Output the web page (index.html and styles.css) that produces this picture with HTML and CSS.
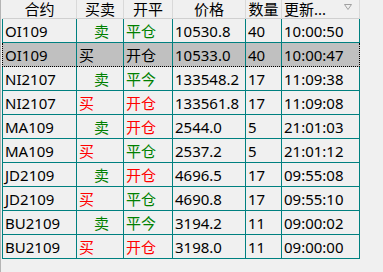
FILE: index.html
```html
<!DOCTYPE html>
<html lang="zh-CN">
<head>
<meta charset="utf-8">
<title>成交记录</title>
<link rel="stylesheet" href="styles.css">
</head>
<body>
<div class="frame">
<table class="grid">
  <thead>
    <tr>
      <th class="c1">合约</th>
      <th class="c2">买卖</th>
      <th class="c3">开平</th>
      <th class="c4">价格</th>
      <th class="c5">数量</th>
      <th class="c6 sortcol"><span class="htxt">更新...</span><svg class="sort" width="8" height="6" viewBox="0 0 8 6"><path d="M0.5 0.5 H7.5 L4 5.5 Z" fill="none" stroke="#a0a0a0" stroke-width="1"/></svg></th>
    </tr>
  </thead>
  <tbody>
    <tr><td>OI109</td><td class="sell"><span class="ind">卖</span></td><td class="close">平仓</td><td>10530.8</td><td>40</td><td>10:00:50</td></tr>
    <tr class="selected"><td>OI109</td><td>买</td><td>开仓</td><td>10533.0</td><td>40</td><td>10:00:47</td></tr>
    <tr><td>NI2107</td><td class="sell"><span class="ind">卖</span></td><td class="close">平今</td><td>133548.2</td><td>17</td><td>11:09:38</td></tr>
    <tr><td>NI2107</td><td class="buy">买</td><td class="open">开仓</td><td>133561.8</td><td>17</td><td>11:09:08</td></tr>
    <tr><td>MA109</td><td class="sell"><span class="ind">卖</span></td><td class="open">开仓</td><td>2544.0</td><td>5</td><td>21:01:03</td></tr>
    <tr><td>MA109</td><td class="buy">买</td><td class="close">平仓</td><td>2537.2</td><td>5</td><td>21:01:12</td></tr>
    <tr><td>JD2109</td><td class="sell"><span class="ind">卖</span></td><td class="open">开仓</td><td>4696.5</td><td>17</td><td>09:55:08</td></tr>
    <tr><td>JD2109</td><td class="buy">买</td><td class="close">平仓</td><td>4690.8</td><td>17</td><td>09:55:10</td></tr>
    <tr><td>BU2109</td><td class="sell"><span class="ind">卖</span></td><td class="close">平今</td><td>3194.2</td><td>11</td><td>09:00:02</td></tr>
    <tr><td>BU2109</td><td class="buy">买</td><td class="open">开仓</td><td>3198.0</td><td>11</td><td>09:00:00</td></tr>
  </tbody>
</table>
</div>
</body>
</html>
```
FILE: styles.css
```css
html, body {
  margin: 0;
  padding: 0;
  background: #f0f0f0;
}
body {
  width: 383px;
  height: 272px;
  overflow: hidden;
  font-family: "Noto Sans", "Noto Sans CJK SC", sans-serif;
  font-size: 15px;
  color: #000;
}
.frame {
  height: 272px;
  border-left: 1px solid #b4b4b4;
  padding-left: 1px;
  box-sizing: border-box;
}
.grid {
  border-collapse: separate;
  border-spacing: 0;
  table-layout: fixed;
  width: 358px;
}
.grid th, .grid td {
  box-sizing: border-box;
  padding: 0 0 0 2px;
  white-space: nowrap;
  line-height: 16px;
}
.grid td {
  overflow: hidden;
}
.grid th {
  height: 19px;
  font-weight: normal;
  text-align: center;
  vertical-align: top;
  padding: 1px 0 0 0;
  line-height: 17px;
  border-right: 1px solid #d9d9d9;
  border-bottom: 1px solid #d0d0d0;
  background: #f0f0f0;
}
.grid th.c1 { width: 75px; border-left: 1px solid #f0f0f0; }
.grid th.c2 { width: 47px; }
.grid th.c3 { width: 49px; }
.grid th.c4 { width: 73px; }
.grid th.c5 { width: 36px; }
.grid th.c6 { width: 78px; }
.grid th.sortcol {
  text-align: left;
  position: relative;
  padding-left: 2px;
}
.sort {
  position: absolute;
  right: 7px;
  top: 4px;
}
.grid td {
  height: 24px;
  vertical-align: middle;
  border-right: 1px solid #008080;
  border-bottom: 1px solid #008080;
}
.grid td:first-child {
  border-left: 1px solid #008080;
}
.sell, .close { color: #008000; }
.buy, .open { color: #ff0000; }
.ind { padding-left: 15px; }
.selected td {
  background: #c0c0c0;
  color: #000;
  border-bottom: 1px dotted #000;
}
.selected td:first-child {
  border-left: 1px dotted #000;
}
.selected td:last-child {
  border-right: 1px dotted #000;
}
tbody tr:first-child td {
  border-bottom-style: solid;
}
```
